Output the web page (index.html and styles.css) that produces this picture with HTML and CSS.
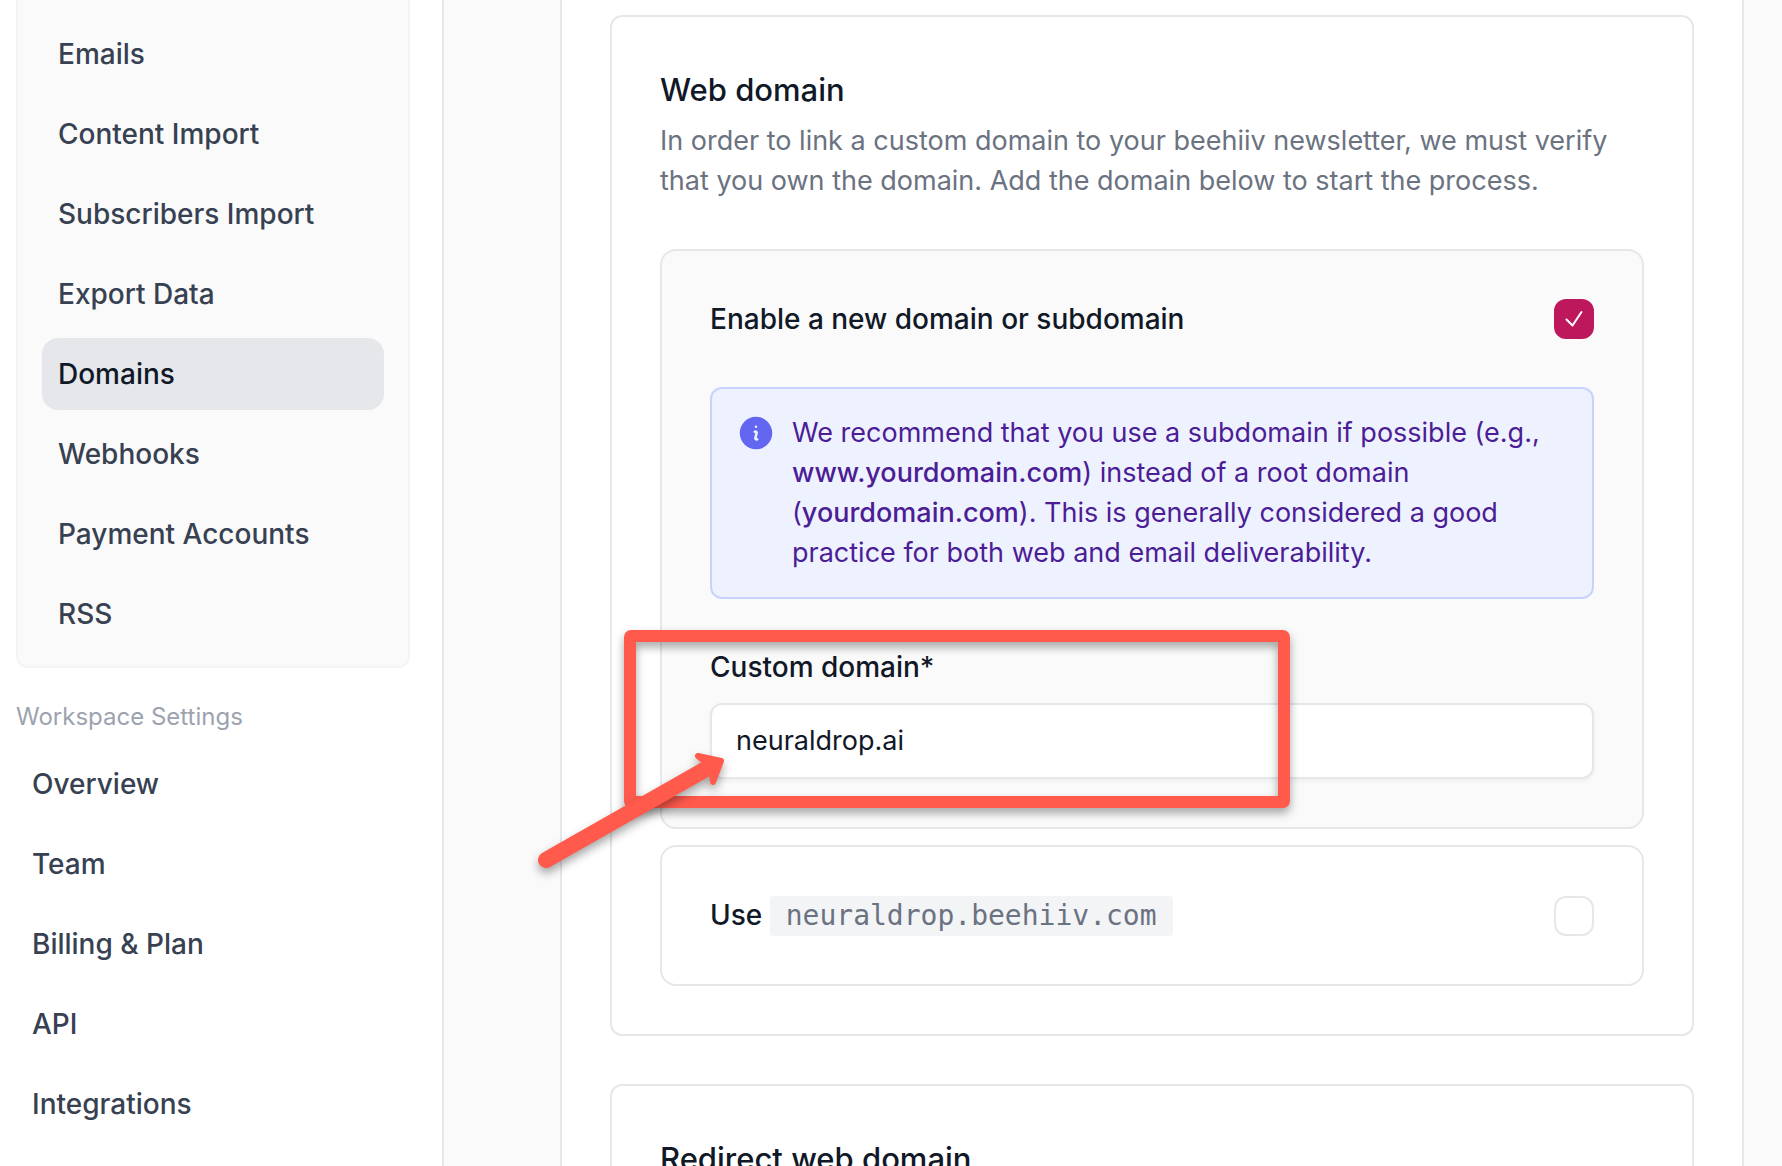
FILE: index.html
```html
<!DOCTYPE html>
<html lang="en">
<head>
    <meta charset="UTF-8">
    <meta name="viewport" content="width=device-width, initial-scale=1.0">
    <title>Domains</title>
    <link rel="stylesheet" href="styles.css">
</head>
<body>
    <div class="app">
        <aside class="sidebar">
            <nav class="nav-card" aria-label="Publication settings">
                <a class="nav-link" href="#">Emails</a>
                <a class="nav-link" href="#">Content Import</a>
                <a class="nav-link" href="#">Subscribers Import</a>
                <a class="nav-link" href="#">Export Data</a>
                <a class="nav-link active" href="#">Domains</a>
                <a class="nav-link" href="#">Webhooks</a>
                <a class="nav-link" href="#">Payment Accounts</a>
                <a class="nav-link" href="#">RSS</a>
            </nav>
            <p class="nav-title">Workspace Settings</p>
            <nav class="nav-list" aria-label="Workspace settings">
                <a class="nav-link" href="#">Overview</a>
                <a class="nav-link" href="#">Team</a>
                <a class="nav-link" href="#">Billing &amp; Plan</a>
                <a class="nav-link" href="#">API</a>
                <a class="nav-link" href="#">Integrations</a>
            </nav>
        </aside>

        <main class="main">
            <div class="panel">
                <section class="card">
                    <h2 class="card-title">Web domain</h2>
                    <p class="card-text">In order to link a custom domain to your beehiiv newsletter, we must verify that you own the domain. Add the domain below to start the process.</p>

                    <div class="options">
                        <div class="option selected">
                            <div class="option-head">
                                <label class="option-label" for="new-domain">Enable a new domain or subdomain</label>
                                <span class="check">
                                    <input type="checkbox" id="new-domain" checked>
                                    <svg viewBox="0 0 40 40" aria-hidden="true">
                                        <path d="M12.5 20.5L18.5 26.5L27.5 13" />
                                    </svg>
                                </span>
                            </div>

                            <div class="notice">
                                <svg class="notice-icon" viewBox="0 0 24 24" aria-hidden="true">
                                    <path fill-rule="evenodd" d="M2.25 12c0-5.385 4.365-9.75 9.75-9.75s9.75 4.365 9.75 9.75-4.365 9.75-9.75 9.75S2.25 17.385 2.25 12zm8.706-1.442c1.146-.573 2.437.463 2.126 1.706l-.709 2.836.042-.02a.75.75 0 01.67 1.34l-.04.022c-1.147.573-2.438-.463-2.127-1.706l.71-2.836-.042.02a.75.75 0 11-.671-1.34l.041-.022zM12 9a.75.75 0 100-1.5.75.75 0 000 1.5z" />
                                </svg>
                                <p>We recommend that you use a subdomain if possible (e.g., <strong>www.yourdomain.com</strong>) instead of a root domain (<strong>yourdomain.com</strong>). This is generally considered a good practice for both web and email deliverability.</p>
                            </div>

                            <div class="field">
                                <label class="option-label" for="custom-domain">Custom domain*</label>
                                <input type="text" id="custom-domain" value="neuraldrop.ai">
                                <svg class="callout" viewBox="0 0 780 270" aria-hidden="true">
                                    <rect class="callout-box" x="100" y="16" width="654" height="166" rx="1" />
                                    <g class="callout-arrow">
                                        <line x1="16" y1="240" x2="176" y2="149" />
                                        <path d="M168 136L191 141L183 162L182 154L175 142Z" />
                                    </g>
                                </svg>
                            </div>
                        </div>

                        <div class="option">
                            <div class="option-head">
                                <label class="option-label" for="default-domain">Use <code>neuraldrop.beehiiv.com</code></label>
                                <span class="check">
                                    <input type="checkbox" id="default-domain">
                                </span>
                            </div>
                        </div>
                    </div>
                </section>

                <section class="card">
                    <h2 class="card-title">Redirect web domain</h2>
                </section>
            </div>
        </main>
    </div>
</body>
</html>
```
FILE: styles.css
```css
* {
    box-sizing: border-box;
}
body {
    margin: 0;
    font-family: Inter, "Liberation Sans", sans-serif;
    font-size: 27px;
    line-height: 40px;
    color: #111827;
    background-color: #fff;
}
h2, p {
    margin: 0;
}
.app {
    display: flex;
    height: 100vh;
    overflow: hidden;
}

/* Sidebar */
.sidebar {
    flex: none;
    width: 444px;
    padding: 0 32px 0 16px;
    border-right: 2px solid #e5e7eb;
}
.nav-card, .nav-list {
    display: flex;
    flex-direction: column;
    gap: 8px;
}
.nav-card {
    padding: 18px 24px 16px;
    background-color: #fafafa;
    border: 2px solid #f3f4f6;
    border-top: 0;
    border-radius: 0 0 12px 12px;
}
.nav-link {
    padding: 16px;
    border-radius: 16px;
    font-size: 28px;
    font-weight: 500;
    color: #374151;
    text-decoration: none;
}
.nav-link.active {
    background-color: #e5e7eb;
    color: #111827;
}
.nav-title {
    padding: 33px 0 15px;
    font-size: 24px;
    line-height: 32px;
    color: #9ca3af;
}

/* Content */
.main {
    flex: 1;
    padding: 0 38px 0 116px;
    background-color: #fafafa;
}
.panel {
    display: flex;
    flex-direction: column;
    gap: 48px;
    min-height: 100%;
    padding: 15px 48px 48px;
    background-color: #fff;
    border: solid #e5e7eb;
    border-width: 0 2px;
}
.card {
    padding: 48px;
    border: 2px solid #e5e7eb;
    border-radius: 12px;
}
.card-title {
    margin-bottom: 6px;
    font-size: 31px;
    line-height: 50px;
    font-weight: 500;
}
.card-text {
    margin-bottom: 48px;
    color: #6b7280;
}
.options {
    display: flex;
    flex-direction: column;
    gap: 16px;
}
.option {
    display: flex;
    flex-direction: column;
    gap: 48px;
    padding: 48px;
    border: 2px solid #e5e7eb;
    border-radius: 16px;
}
.option.selected {
    background-color: #fafafa;
}
.option-head {
    display: flex;
    align-items: center;
    justify-content: space-between;
}
.option-label {
    font-size: 28px;
    font-weight: 500;
}
code {
    display: inline-block;
    padding: 0 16px;
    background-color: #f3f4f6;
    border-radius: 4px;
    font-family: "DejaVu Sans Mono", monospace;
    font-size: 28px;
    font-weight: 400;
    color: #6b7280;
}

/* Checkbox */
.check {
    display: grid;
    width: 40px;
    height: 40px;
}
.check > * {
    grid-area: 1 / 1;
}
.check input {
    appearance: none;
    margin: 0;
    background-color: #fff;
    border: 2px solid #e5e7eb;
    border-radius: 12px;
}
.check input:checked {
    background-color: #be185d;
    border-color: #be185d;
}
.check svg {
    fill: none;
    stroke: #fff;
    stroke-width: 2;
    stroke-linecap: round;
    stroke-linejoin: round;
    pointer-events: none;
}
.check input:not(:checked) + svg {
    visibility: hidden;
}

/* Notice */
.notice {
    display: flex;
    gap: 16px;
    padding: 24px;
    background-color: #eef2ff;
    border: 2px solid #c7d2fe;
    border-radius: 12px;
    color: #4c1d95;
}
.notice strong {
    font-weight: 500;
}
.notice-icon {
    flex: none;
    width: 40px;
    height: 40px;
    fill: #6366f1;
}

/* Text field */
.field {
    position: relative;
    display: flex;
    flex-direction: column;
    gap: 16px;
}
.field input {
    padding: 16px 24px;
    border: 2px solid #e5e7eb;
    border-radius: 12px;
    box-shadow: 0 2px 4px rgba(0, 0, 0, 0.05);
    background-color: #fff;
    font: inherit;
    color: inherit;
}

/* Callout drawn over the field */
.callout {
    position: absolute;
    top: -27px;
    left: -180px;
    width: 780px;
    height: 270px;
    overflow: visible;
    pointer-events: none;
}
.callout-box, .callout-arrow {
    stroke: #ff5a4c;
    stroke-linejoin: round;
    stroke-linecap: round;
    filter: drop-shadow(0 5px 5px rgba(0, 0, 0, 0.35));
}
.callout-box {
    fill: none;
    stroke-width: 12;
}
.callout-arrow {
    fill: #ff5a4c;
    stroke-width: 6;
}
.callout-arrow line {
    stroke-width: 16;
}
```
